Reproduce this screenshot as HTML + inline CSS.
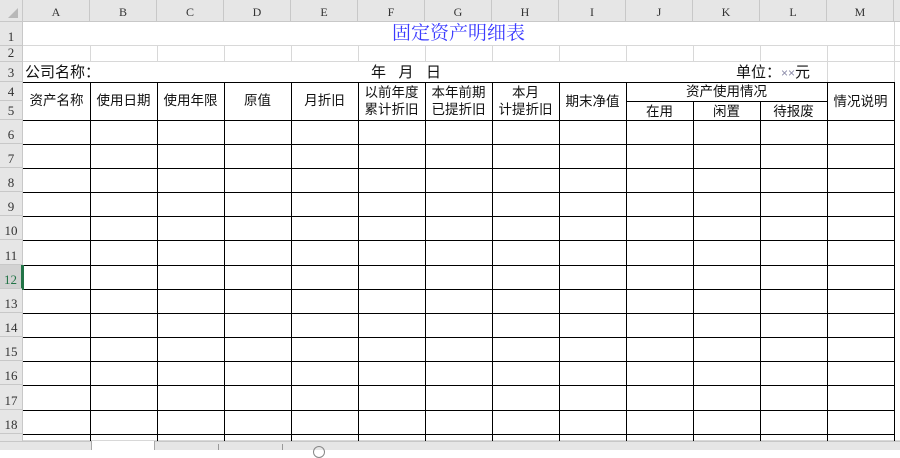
<!DOCTYPE html>
<html><head><meta charset="utf-8"><style>
body{margin:0;width:900px;height:450px;overflow:hidden;background:#fff;position:relative;font-family:"Liberation Sans","Noto Sans CJK SC",sans-serif;}
div{position:absolute;box-sizing:border-box}
.ch{top:0;height:22px;background:#e6e6e6;border-right:1px solid #c8c8c8;border-bottom:1px solid #c8c8c8;font:12px "Liberation Serif",serif;color:#333;text-align:center;line-height:24px}
.rh{left:0;width:23px;background:#e6e6e6;border-bottom:1px solid #c8c8c8;border-right:1px solid #c8c8c8;font:13px "Liberation Serif",serif;color:#333;text-align:center;padding-top:2px;display:flex;align-items:flex-end;justify-content:center}
.v{width:1px;background:#000}
.h{height:1px;background:#000}
.lv{width:1px;background:#d8d8d8}
.lh{height:1px;background:#d8d8d8}
.t{font-size:13.5px;color:#111;text-align:center;line-height:17px;white-space:nowrap}
</style></head><body>
<div class="ch" style="left:0;width:23px"></div>
<div style="left:8px;top:8px;width:0;height:0;border-left:10px solid transparent;border-bottom:10px solid #b8b8b8"></div>
<div class="ch" style="left:23px;width:67px">A</div>
<div class="ch" style="left:90px;width:67px">B</div>
<div class="ch" style="left:157px;width:67px">C</div>
<div class="ch" style="left:224px;width:67px">D</div>
<div class="ch" style="left:291px;width:67px">E</div>
<div class="ch" style="left:358px;width:67px">F</div>
<div class="ch" style="left:425px;width:67px">G</div>
<div class="ch" style="left:492px;width:67px">H</div>
<div class="ch" style="left:559px;width:67px">I</div>
<div class="ch" style="left:626px;width:67px">J</div>
<div class="ch" style="left:693px;width:67px">K</div>
<div class="ch" style="left:760px;width:67px">L</div>
<div class="ch" style="left:827px;width:67px">M</div>
<div class="ch" style="left:894px;width:6px;border-right:0"></div>

<div class="rh" style="top:22px;height:24px">1</div>
<div class="rh" style="top:46px;height:16px">2</div>
<div class="rh" style="top:62px;height:20px">3</div>
<div class="rh" style="top:82px;height:19px">4</div>
<div class="rh" style="top:101px;height:19px">5</div>
<div class="rh" style="top:120px;height:24px">6</div>
<div class="rh" style="top:144px;height:24px">7</div>
<div class="rh" style="top:168px;height:24px">8</div>
<div class="rh" style="top:192px;height:24px">9</div>
<div class="rh" style="top:216px;height:24px">10</div>
<div class="rh" style="top:240px;height:25px">11</div>
<div class="rh" style="top:265px;height:24px;background:#d2d2d2;color:#217346;border-right:2px solid #217346">12</div>
<div class="rh" style="top:289px;height:24px">13</div>
<div class="rh" style="top:313px;height:24px">14</div>
<div class="rh" style="top:337px;height:24px">15</div>
<div class="rh" style="top:361px;height:24px">16</div>
<div class="rh" style="top:385px;height:25px">17</div>
<div class="rh" style="top:410px;height:24px">18</div>
<div class="rh" style="top:434px;height:8px"></div>

<div class="lh" style="left:23px;top:45px;width:877px"></div>
<div class="lh" style="left:23px;top:61px;width:877px"></div>
<div class="lv" style="left:894px;top:22px;height:60px"></div>
<div class="lv" style="left:827px;top:62px;height:20px"></div>
<div class="lv" style="left:90px;top:46px;height:16px"></div>
<div class="lv" style="left:157px;top:46px;height:16px"></div>
<div class="lv" style="left:224px;top:46px;height:16px"></div>
<div class="lv" style="left:291px;top:46px;height:16px"></div>
<div class="lv" style="left:358px;top:46px;height:16px"></div>
<div class="lv" style="left:425px;top:46px;height:16px"></div>
<div class="lv" style="left:492px;top:46px;height:16px"></div>
<div class="lv" style="left:559px;top:46px;height:16px"></div>
<div class="lv" style="left:626px;top:46px;height:16px"></div>
<div class="lv" style="left:693px;top:46px;height:16px"></div>
<div class="lv" style="left:760px;top:46px;height:16px"></div>
<div class="lv" style="left:827px;top:46px;height:16px"></div>
<div class="lh" style="left:23px;top:440px;width:877px"></div>

<div class="h" style="left:23px;top:82px;width:872px"></div>
<div class="h" style="left:626px;top:101px;width:201px"></div>
<div class="h" style="left:23px;top:120px;width:872px"></div>
<div class="h" style="left:23px;top:144px;width:872px"></div>
<div class="h" style="left:23px;top:168px;width:872px"></div>
<div class="h" style="left:23px;top:192px;width:872px"></div>
<div class="h" style="left:23px;top:216px;width:872px"></div>
<div class="h" style="left:23px;top:240px;width:872px"></div>
<div class="h" style="left:23px;top:265px;width:872px"></div>
<div class="h" style="left:23px;top:289px;width:872px"></div>
<div class="h" style="left:23px;top:313px;width:872px"></div>
<div class="h" style="left:23px;top:337px;width:872px"></div>
<div class="h" style="left:23px;top:361px;width:872px"></div>
<div class="h" style="left:23px;top:385px;width:872px"></div>
<div class="h" style="left:23px;top:410px;width:872px"></div>
<div class="h" style="left:23px;top:434px;width:872px"></div>
<div class="v" style="left:90px;top:82px;height:360px"></div>
<div class="v" style="left:157px;top:82px;height:360px"></div>
<div class="v" style="left:224px;top:82px;height:360px"></div>
<div class="v" style="left:291px;top:82px;height:360px"></div>
<div class="v" style="left:358px;top:82px;height:360px"></div>
<div class="v" style="left:425px;top:82px;height:360px"></div>
<div class="v" style="left:492px;top:82px;height:360px"></div>
<div class="v" style="left:559px;top:82px;height:360px"></div>
<div class="v" style="left:626px;top:82px;height:360px"></div>
<div class="v" style="left:693px;top:101px;height:341px"></div>
<div class="v" style="left:760px;top:101px;height:341px"></div>
<div class="v" style="left:827px;top:82px;height:360px"></div>
<div class="v" style="left:894px;top:82px;height:360px"></div>
<div style="left:22px;top:265px;width:2px;height:25px;background:#217346"></div>

<div style="left:23px;top:22px;width:871px;height:24px;text-align:center;font:19px/24px 'Liberation Serif','Noto Serif CJK SC',serif;color:#3b3bff">固定资产明细表</div>
<div class="t" style="left:25px;top:64px;font-size:15px">公司名称：</div>
<div class="t" style="left:371px;top:64px;font-size:15px">年&nbsp;&nbsp;&nbsp;月&nbsp;&nbsp;&nbsp;日</div>
<div class="t" style="left:736px;top:64px;font-size:15px">单位：<span style="color:#8a8aa8;font-size:12px">××</span>元</div>

<div class="t" style="left:23px;top:92px;width:67px">资产名称</div>
<div class="t" style="left:90px;top:92px;width:67px">使用日期</div>
<div class="t" style="left:157px;top:92px;width:67px">使用年限</div>
<div class="t" style="left:224px;top:92px;width:67px">原值</div>
<div class="t" style="left:291px;top:92px;width:67px">月折旧</div>
<div class="t" style="left:358px;top:84px;width:67px">以前年度<br>累计折旧</div>
<div class="t" style="left:425px;top:84px;width:67px">本年前期<br>已提折旧</div>
<div class="t" style="left:492px;top:84px;width:67px">本月<br>计提折旧</div>
<div class="t" style="left:559px;top:93px;width:67px">期末净值</div>
<div class="t" style="left:626px;top:83px;width:201px">资产使用情况</div>
<div class="t" style="left:626px;top:103px;width:67px">在用</div>
<div class="t" style="left:693px;top:103px;width:67px">闲置</div>
<div class="t" style="left:760px;top:103px;width:67px">待报废</div>
<div class="t" style="left:827px;top:93px;width:67px">情况说明</div>

<div style="left:0;top:441px;width:900px;height:9px;background:#e6e6e6;border-top:1px solid #c8c8c8"></div>
<div style="left:91px;top:441px;width:64px;height:9px;background:#fff;border-left:1px solid #aaa;border-right:1px solid #aaa"></div>
<div style="left:218px;top:444px;width:1px;height:6px;background:#999"></div>
<div style="left:282px;top:444px;width:1px;height:6px;background:#999"></div>
<div style="left:313px;top:446px;width:12px;height:12px;border:1px solid #888;border-radius:50%"></div>
</body></html>
